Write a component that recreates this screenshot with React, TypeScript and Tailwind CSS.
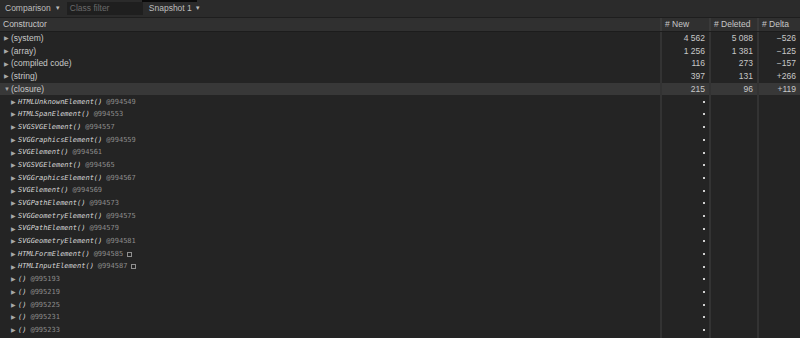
import React from "react";

type Top = { name: string; n: string; d: string; delta: string; open?: boolean };

const tops: Top[] = [
  { name: "(system)", n: "4 562", d: "5 088", delta: "\u2212526" },
  { name: "(array)", n: "1 256", d: "1 381", delta: "\u2212125" },
  { name: "(compiled code)", n: "116", d: "273", delta: "\u2212157" },
  { name: "(string)", n: "397", d: "131", delta: "+266" },
  { name: "(closure)", n: "215", d: "96", delta: "+119", open: true },
];

const kids: [string, string, boolean?][] = [
  ["HTMLUnknownElement()", "@994549"],
  ["HTMLSpanElement()", "@994553"],
  ["SVGSVGElement()", "@994557"],
  ["SVGGraphicsElement()", "@994559"],
  ["SVGElement()", "@994561"],
  ["SVGSVGElement()", "@994565"],
  ["SVGGraphicsElement()", "@994567"],
  ["SVGElement()", "@994569"],
  ["SVGPathElement()", "@994573"],
  ["SVGGeometryElement()", "@994575"],
  ["SVGPathElement()", "@994579"],
  ["SVGGeometryElement()", "@994581"],
  ["HTMLFormElement()", "@994585", true],
  ["HTMLInputElement()", "@994587", true],
  ["()", "@995193"],
  ["()", "@995219"],
  ["()", "@995225"],
  ["()", "@995231"],
  ["()", "@995233"],
];

const sans = "font-['Liberation_Sans',Arial,sans-serif]";
const mono = "font-['DejaVu_Sans_Mono',monospace]";

function Tri({ open }: { open?: boolean }) {
  return (
    <span className="inline-block w-[5px] text-[6px] leading-none text-[#a8a8a8] mr-[2px]">
      {open ? "\u25BC" : "\u25B6"}
    </span>
  );
}

function Cells({ n, d, delta, dot }: { n?: string; d?: string; delta?: string; dot?: boolean }) {
  return (
    <>
      <div className="w-[49px] shrink-0 flex items-center justify-end pr-[4px] border-l-2 border-[#333333]">
        {dot ? <span className="w-[2px] h-[2px] bg-[#d0d0d0]" /> : n}
      </div>
      <div className="w-[48px] shrink-0 flex items-center justify-end pr-[4px] border-l-2 border-[#333333]">{d}</div>
      <div className="w-[43px] shrink-0 flex items-center justify-end pr-[4px] border-l-2 border-[#333333]">{delta}</div>
    </>
  );
}

export default function App() {
  return (
    <div className={`w-[800px] h-[338px] overflow-hidden bg-[#242424] text-[#c8c8c8] ${sans} text-[8.5px] flex flex-col`}>
      <div className="relative h-[18px] shrink-0 bg-[#2b2b2b] border-b border-[#1e1e1e] flex items-center">
        <div className="absolute left-[142px] top-0 w-[55px] h-[2px] bg-[#0a0a0a]" />
        <div className="flex items-center pl-[5px] text-[#bdbdbd]">
          Comparison <span className="ml-[4px] text-[6px]">{"\u25BC"}</span>
        </div>
        <div className="ml-[6px] w-[76px] h-[13px] bg-[#1f1f1f] flex items-center pl-[3px] text-[#6a6a6a]">Class filter</div>
        <div className="ml-[6px] flex items-center text-[#bdbdbd]">
          Snapshot 1 <span className="ml-[3px] text-[6px]">{"\u25BC"}</span>
        </div>
      </div>
      <div className="h-[14px] shrink-0 bg-[#303030] border-b border-[#1c1c1c] flex text-[#c8c8c8]">
        <div className="flex-1 flex items-center pl-[3px]">Constructor</div>
        <div className="w-[49px] shrink-0 flex items-center pl-[3px] border-l-2 border-[#3a3a3a]"># New</div>
        <div className="w-[48px] shrink-0 flex items-center pl-[3px] border-l-2 border-[#3a3a3a]"># Deleted</div>
        <div className="w-[43px] shrink-0 flex items-center pl-[3px] border-l-2 border-[#3a3a3a]"># Delta</div>
      </div>
      <div className="flex-1 flex flex-col">
        {tops.map((t) => (
          <div key={t.name} className={`h-[12.7px] flex ${t.open ? "bg-[#383838]" : ""}`}>
            <div className="flex-1 flex items-center pl-[4px]">
              <Tri open={t.open} />
              {t.name}
            </div>
            <Cells n={t.n} d={t.d} delta={t.delta} />
          </div>
        ))}
        {kids.map(([fn, id, box], i) => (
          <div key={i} className="h-[12.7px] flex">
            <div className="flex-1 flex items-center pl-[11px]">
              <Tri />
              <span className={`${mono} italic text-[7px] text-[#d6d6d6] font-medium`}>{fn}</span>
              <span className={`${mono} text-[7px] text-[#8c8c8c] ml-[4px]`}>{id}</span>
              {box && <span className="ml-[4px] w-[5px] h-[5px] border border-[#8f8f8f]" />}
            </div>
            <Cells dot />
          </div>
        ))}
        <div className="flex-1 flex">
          <div className="flex-1" />
          <Cells />
        </div>
      </div>
    </div>
  );
}
